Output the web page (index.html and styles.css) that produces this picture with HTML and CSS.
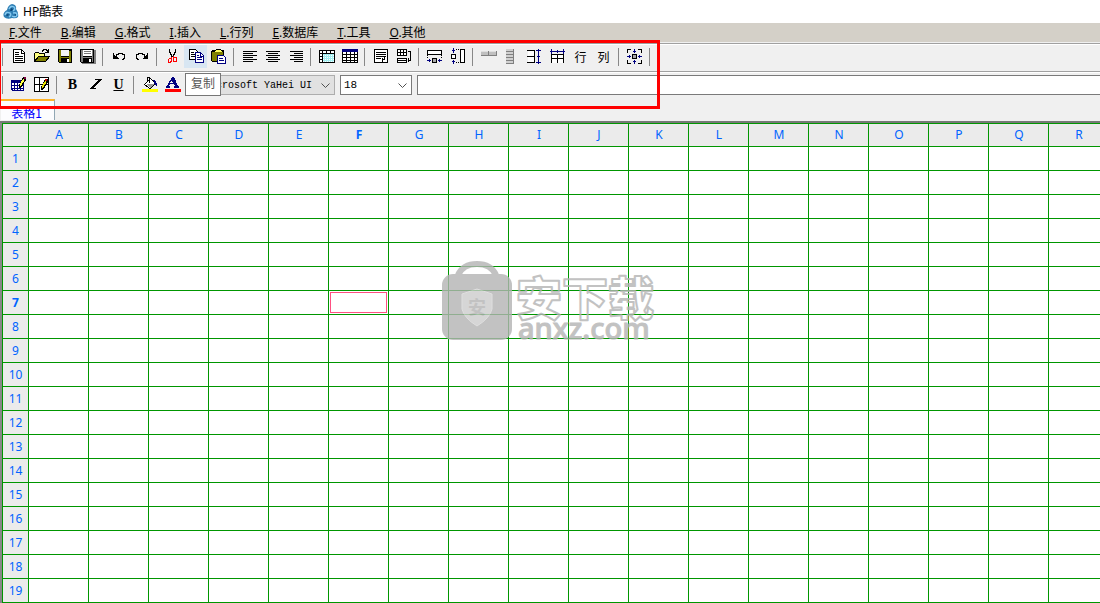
FILE: index.html
```html
<!DOCTYPE html>
<html lang="zh-CN">
<head>
<meta charset="utf-8">
<title>HP酷表</title>
<link rel="stylesheet" href="styles.css">
</head>
<body>
<div class="app">
  <header class="title-bar">
    <svg class="logo" viewBox="0 0 16 16" aria-hidden="true"><path d="M4 6Q5 1 9 0Q14 1 13 5Q16 9 15 13Q13 15 9 14Q4 16 1 13Q-1 9 4 6Z" fill="#2f7fb5"/><path d="M6 5Q8 1 11 3Q13 5 10 7M2 11Q3 7 7 9Q9 11 6 13M10 9Q14 8 14 11Q12 14 9 12" fill="none" stroke="#86c9ef" stroke-width="1.4"/><path d="M8 4l2 1-1 2-2 0zM3 11l2-1 1 1-2 1zM11 11l2-1 0 2z" fill="#0b4678"/></svg>
    <span>HP酷表</span>
  </header>
  <nav class="menu">
    <button><u>F</u>.文件</button><button><u>B</u>.编辑</button><button><u>G</u>.格式</button><button><u>I</u>.插入</button><button><u>L</u>.行列</button><button><u>E</u>.数据库</button><button><u>T</u>.工具</button><button><u>O</u>.其他</button>
  </nav>

  <div class="toolbar">
    <i class="sep first"></i>
    <button class="tool" aria-label="新建"><svg viewBox="0 0 17 17"><path d="M3.500 1.500H11.500L14.500 4.500V14.500H3.500Z" fill="#fff" stroke="#000"/><path d="M11.500 1v4H15M5 4.500h4M5 6.500h4M5 8.500h8M5 10.500h8M5 12.500h8" fill="none" stroke="#000"/></svg></button>
    <button class="tool" aria-label="打开"><svg viewBox="0 0 17 17"><path d="M1.500 13.500V5.500L2.500 4.500H5.500L6.500 5.500H11.500V8.500" fill="#ffff80" stroke="#000"/><path d="M1.500 13.500L5.500 8.500H16.500L12.500 13.500Z" fill="#808000" stroke="#000"/><path d="M9 3.500V2.500H10V1.500H13V2.500H14V3.500H15V5M12 4.500h4M15.500 1v4" fill="none" stroke="#000"/></svg></button>
    <button class="tool" aria-label="保存"><svg viewBox="0 0 17 17"><path d="M2 1H16V15H3L2 14Z"/><path d="M3 2H5V9H13V3H15V14H3Z" fill="#808000"/><path d="M5 2h8v6H5z" fill="#f4f4f4"/><path d="M5 10h8v5H5z"/><path d="M11 11h2v3h-2z" fill="#fff"/></svg></button>
    <button class="tool" aria-label="另存为"><svg viewBox="0 0 17 17"><path d="M3 2h14v14H3z" fill="#808080"/><path d="M1 1H15V15H2L1 14Z"/><path d="M2 2h2v7h9V2h1v12H2z" fill="#808080"/><path d="M4 2h9v6H4z" fill="#fff"/><path d="M5 3.500h7M5 5.500h7" stroke="#777"/><path d="M4 10h9v5H4z"/><path d="M10 11h2v3h-2z" fill="#fff"/></svg></button>
    <i class="sep"></i>
    <button class="tool" aria-label="撤消"><svg viewBox="0 0 17 17"><path d="M3 5v6h6L7 9H6V8H5V7H4V5Z"/><path d="M5 8.500H6.500V6.500H8.500V5.500H12.500V6.500H14.500V10.500H13.500V11.500H12" fill="none" stroke="#000"/></svg></button>
    <button class="tool" aria-label="重做"><svg viewBox="0 0 17 17"><path d="M15 5v6H9l2-2h1V8h1V7h1V5Z"/><path d="M13 8.500H11.500V6.500H9.500V5.500H5.500V6.500H3.500V10.500H4.500V11.500H6" fill="none" stroke="#000"/></svg></button>
    <i class="sep"></i>
    <button class="tool" aria-label="剪切"><svg viewBox="0 0 17 17"><path d="M5.500 1V4.500H6.500V6.500H7.500V8.500H8.500V9M11.500 1V4.500H10.500V6.500H9.500V8.500" fill="none" stroke="#000"/><path d="M7.500 9v2M9.500 8v2M5 10.500H7.500V13.500H6.500V14.500H4.500V11.500H5M10 9.500H12.500V13.500H9.500V9.500" fill="none" stroke="red"/></svg></button>
    <button class="tool hot" aria-label="复制"><svg viewBox="0 0 17 17"><path d="M2.500 1.500H8.500L10.500 3.500V11.500H2.500Z" fill="#fff" stroke="#000"/><path d="M4 4.500h3M4 6.500h4M4 8.500h4" stroke="#000"/><path d="M8.500 4.500H13.500L16.500 7.500V14.500H8.500Z" fill="#fff" stroke="#000080"/><path d="M13.500 4v4H17M10 7.500h2M10 9.500h5M10 11.500h5" fill="none" stroke="#000080"/></svg></button>
    <button class="tool" aria-label="粘贴"><svg viewBox="0 0 17 17"><path d="M1 3L2 2H5L6 1H10L11 2H14V14H2L1 13Z"/><path d="M2 4h11v9H2z" fill="#808000"/><path d="M4 4h8L10 2H6z" fill="#ffff60"/><path d="M7.500 7.500H13.500L15.500 9.500V15.500H7.500Z" fill="#fff" stroke="#000080"/><path d="M9 10.500h4M9 12.500h5" stroke="#000080"/></svg></button>
    <i class="sep"></i>
    <button class="tool" aria-label="左对齐"><svg viewBox="0 0 17 17"><path d="M2 3.500h14M2 5.500h10M2 7.500h14M2 9.500h10M2 11.500h14M2 13.500h10" stroke="#000"/></svg></button>
    <button class="tool" aria-label="居中"><svg viewBox="0 0 17 17"><path d="M2 3.500h14M4 5.500h10M2 7.500h14M4 9.500h10M2 11.500h14M4 13.500h10" stroke="#000"/></svg></button>
    <button class="tool" aria-label="右对齐"><svg viewBox="0 0 17 17"><path d="M3 3.500h13M7 5.500h9M3 7.500h13M7 9.500h9M3 11.500h13M7 13.500h9" stroke="#000"/></svg></button>
    <i class="sep"></i>
    <button class="tool" aria-label="冻结"><svg viewBox="0 0 17 17"><path d="M1.500 2.500h15v12h-15z" fill="#fff" stroke="#000"/><path d="M5 6h11v8H5z" fill="#a4f0f2"/><path d="M5 7.500h11M5 9.500h11M5 11.500h11M5 13.500h11" stroke="#fff" stroke-dasharray="1 1"/><path d="M1 5.500h4M1 8.500h3M1 11.500h3M4.500 2v12M8.500 2v3M12.500 2v3M5 5.500h11" stroke="#000"/></svg></button>
    <button class="tool" aria-label="表格"><svg viewBox="0 0 17 17"><path d="M1.500 1.500h15v13h-15z" fill="#fff" stroke="#000"/><path d="M1 1h16v3H1z" fill="#000080"/><path d="M1 6.500h15M1 9.500h15M1 12.500h15M5.500 4v11M9.500 4v11M13.500 4v11" stroke="#000"/></svg></button>
    <i class="sep"></i>
    <button class="tool" aria-label="自动换行"><svg viewBox="0 0 17 17"><path d="M2.500 1.500h13v13h-13z" fill="#fff" stroke="#000"/><path d="M4 4.500h10M4 6.500h10M4 8.500h10M4 10.500h5M12.500 9v2.500H9.500M10.500 10v4" fill="none" stroke="#000"/></svg></button>
    <button class="tool" aria-label="转置"><svg viewBox="0 0 17 17"><path d="M2.500 1.500h9v6h-9zM2.500 10.500h9v4h-9z" fill="#fff" stroke="#000"/><path d="M2 4.500h9M5.500 1v6M8.500 1v6M3 12.500h8M13 3.500h2.500V12.500H13M13.500 10v4" fill="none" stroke="#000"/></svg></button>
    <i class="sep"></i>
    <button class="tool" aria-label="等行高"><svg viewBox="0 0 17 17"><path d="M1.500 2.500h14v4h-14z" fill="#fff" stroke="#000"/><path d="M1.500 7v4M15.500 7v4" stroke="#000" stroke-dasharray="1 1"/><path d="M6.500 10.500h4v4h-4z" fill="#aaa" stroke="#000"/><path d="M1 12.500h4M3.500 11v3M12 12.500h4M13.500 11v3" stroke="#000080"/></svg></button>
    <button class="tool" aria-label="等列宽"><svg viewBox="0 0 17 17"><path d="M11.500 1.500h4v13h-4zM2.500 6.500h4v4h-4z" fill="#fff" stroke="#000"/><path d="M7 1.500h4M7 14.500h4" stroke="#000" stroke-dasharray="1 1"/><path d="M4.500 0v5M3 2.500h3M4.500 12v4M3 13.500h3" stroke="#000080"/></svg></button>
    <i class="sep"></i>
    <button class="tool" aria-label="合并行" disabled><svg viewBox="0 0 17 17"><path d="M1 3h16v5H1z" fill="#808080"/><path d="M1 3h7v4H1zM9 3h7v4H9z" fill="#c0c0c0"/><path d="M1 3.500h7M9 3.500h7" stroke="#fff" stroke-opacity=".5"/></svg></button>
    <button class="tool" aria-label="合并列" disabled><svg viewBox="0 0 17 17"><path d="M3 1h8v15H3z" fill="#808080"/><path d="M3 1h7v2H3zM3 4h7v2H3zM3 7h7v2H3zM3 10h7v2H3zM3 13h7v2H3z" fill="#d0d0d0"/></svg></button>
    <button class="tool" aria-label="拆分行"><svg viewBox="0 0 17 17"><path d="M2 3h7v11H2z" fill="#fff"/><path d="M1 2.500h7.500V14.500H1M1 8.500h8" fill="none" stroke="#000"/><path d="M12.500 1v15M10 2.500h5M10 14.500h5M11 8.500h3" stroke="#000080"/></svg></button>
    <button class="tool" aria-label="拆分列"><svg viewBox="0 0 17 17"><path d="M2 7h13v8H2z" fill="#fff"/><path d="M2.500 15V6.500H14.500V15M8.500 7v8M2 10.500h12" fill="none" stroke="#000"/><path d="M1 3.500h15M2.500 1v5M8.500 2v3M14.500 1v5" stroke="#000080"/></svg></button>
    <button class="tool word">行</button>
    <button class="tool word">列</button>
    <i class="sep"></i>
    <button class="tool" aria-label="适应"><svg viewBox="0 0 17 17"><path d="M5 1.500H1.500V5M12 1.500h3.500V5M1.500 12v3.500H5M12 15.500h3.500V12M6.500 6.500h4v4h-4z" fill="none" stroke="#000"/><path d="M7 7h3v3H7z" fill="#aaa"/><path d="M8.500 1v4M7 3.500h3M8.500 12v4M7 13.500h3M1 8.500h4M3.500 7v3M12 8.500h4M13.500 7v3" stroke="#000080"/></svg></button>
    <i class="sep"></i>
  </div>

  <div class="toolbar">
    <i class="sep first"></i>
    <button class="tool" aria-label="表格属性"><svg viewBox="0 0 17 17"><path d="M1 4h13v11H2V14H1z" fill="#000080"/><path d="M2 7h2v2H2zM5 7h2v2H5zM8 7h2v2H8zM2 10h2v2H2zM5 10h2v2H5zM8 10h2v2H8zM11 10h2v2h-2zM3 13h1v1H3zM5 13h2v1H5zM8 13h2v1H8zM11 13h2v1h-2z" fill="#fff"/><path d="M13 1h3v3L11 12H9V9z"/><path d="M13 3h1v2l-3 5h-1V8z" fill="#ffff40"/><path d="M14 1h2v2h-2z" fill="#800040"/></svg></button>
    <button class="tool" aria-label="单元格属性"><svg viewBox="0 0 17 17"><path d="M1.500 1.500h14v14h-14z" fill="#fff" stroke="#000"/><path d="M6.500 1v14M1 8.500h14" stroke="#000"/><path d="M12 3h3v3l-5 8H8v-3z"/><path d="M12 5h1v2l-3 5H9v-2z" fill="#e8e000"/><path d="M12 3h2v2h-2z" fill="#c00000"/></svg></button>
    <i class="sep"></i>
    <button class="tool bold">B</button>
    <button class="tool" aria-label="斜体"><svg viewBox="0 0 17 17"><path d="M8 3.500h7M3 12.500h6" stroke="#000"/><path d="M11 4h3L7 12H4z"/></svg></button>
    <button class="tool under">U</button>
    <i class="sep"></i>
    <button class="tool" aria-label="填充颜色"><svg viewBox="0 0 17 17"><path d="M3.500 8.500L9.500 2.500L14.500 7.500L9 12.500Z" fill="#fff" stroke="#000"/><path d="M5 8h8l-4 4z" fill="#999"/><path d="M12 4q4 0 4 7l-2-2z" fill="#000080"/><path d="M6.500 5V1.500H8.500V7" fill="none" stroke="#000"/><path d="M1 13h16v3H1z" fill="#ff0"/></svg></button>
    <button class="tool" aria-label="字体颜色"><svg viewBox="0 0 17 17"><path d="M8 1h2l4 9h1v2h-5v-2h1l-1-2H6l-1 2h1v2H2v-2h1zM8 4L6 7h3z" fill="#000080" fill-rule="evenodd"/><path d="M1 13h16v3H1z" fill="red"/></svg></button>
    <i class="sep"></i>
    <span class="combo font-combo"><select aria-label="字体"><option>Microsoft YaHei UI</option></select><svg viewBox="0 0 9 5"><path d="M0.500 0.500L4.500 4.500L8.500 0.500"/></svg></span>
    <span class="combo size-combo"><select aria-label="字号"><option>18</option></select><svg viewBox="0 0 9 5"><path d="M0.500 0.500L4.500 4.500L8.500 0.500"/></svg></span>
    <input class="formula" type="text" aria-label="编辑栏">
    <span class="tip" role="tooltip">复制</span>
  </div>

  <div class="tabs"><button class="tab">表格1</button></div>
  <main class="sheet">
    <table id="grid"></table>
    <svg class="watermark" viewBox="0 0 216 92" role="img" aria-label="安下载 anxz.com">
      <g opacity=".8">
        <path d="M17 15Q22 4 36 4Q50 4 55 15" fill="none" stroke="#b4b4b4" stroke-width="6"/>
        <rect x="1" y="14" width="70" height="66" rx="11" fill="#b4b4b4"/>
        <path d="M36 29L51 34V49Q49 58 36 66Q23 58 21 49V34Z" fill="#ccc" stroke="#d8d8d8"/>
        <text x="36" y="54" class="mark">安</text>
        <text x="75" y="55" class="brand">安下载</text>
        <text x="77" y="79" class="domain">anxz.com</text>
      </g>
    </svg>
  </main>
  <div class="highlight"></div>
</div>
<script src="grid.js"></script>
</body>
</html>
```
FILE: styles.css
```css
* { box-sizing: border-box; }
body { margin: 0; background: #fff; color: #000; font: 12px/16px "Noto Sans", "Noto Sans CJK SC", sans-serif; }
button, input, select { font: inherit; color: inherit; margin: 0; padding: 0; border: 0; background: none; border-radius: 0; }
.app { position: relative; height: 100vh; overflow: hidden; display: flex; flex-direction: column; background: #f0f0f0; }
.title-bar { flex: none; height: 23px; display: flex; align-items: center; gap: 4px; padding-left: 3px; background: #fff; }
.logo { width: 16px; height: 16px; }
.menu { flex: none; height: 19px; margin-bottom: 1px; display: flex; gap: 19px; padding-left: 9px; background: #d4d0c8; }
.menu button { white-space: nowrap; }

.toolbar { position: relative; flex: none; height: 28px; display: flex; align-items: center; padding-bottom: 2px; border-top: 1px solid #a0a0a0; box-shadow: inset 0 1px #fff; }
.sep { flex: none; width: 5px; height: 18px; margin-left: 3px; border-left: 1px solid #888; }
.sep.first { margin-left: 2px; }
.tool { flex: none; width: 23px; height: 23px; display: flex; align-items: center; justify-content: flex-start; padding-left: 3px; }
.tool svg { width: 17px; height: 17px; shape-rendering: crispEdges; }
.tool.hot { background: #d8e6f2; }
.tool.word { justify-content: center; padding: 0; font-family: "Noto Sans CJK SC", sans-serif; }
.tool.bold, .tool.under { justify-content: center; padding: 0; font: bold 14px/18px "Liberation Serif", serif; }
.tool.under { text-decoration: underline; }
.combo { position: relative; align-self: flex-end; flex: none; height: 20px; margin: 0 5px 2px 0; }
.combo select { appearance: none; width: 100%; height: 20px; padding: 1px 0 0 11px; border: 1px solid #adadad; background: #e1e1e1; font: 10px/17px "Liberation Mono", monospace; }
.combo svg { position: absolute; right: 5px; top: 8px; width: 9px; height: 5px; fill: none; stroke: #505050; pointer-events: none; }
.font-combo { width: 143px; }
.size-combo { width: 72px; }
.combo.size-combo select { background: #fff; border-color: #7a7a7a; padding: 0 0 0 3px; font-size: 11px; }
.formula { flex: 1; min-width: 0; align-self: flex-end; height: 20px; margin-bottom: 2px; border: 1px solid #7a7a7a; border-right: 0; background: #fff; padding: 0 4px; }
.tip { position: absolute; left: 185px; top: 1px; height: 23px; padding: 0 5px; border: 1px solid #767676; background: #fff; color: #575757; line-height: 20px; }

.tabs { flex: none; height: 24px; display: flex; padding-left: 1px; border-bottom: 2px solid #777; }
.tab { width: 54px; height: 21px; padding: 4px 2px 0 0; border-top: 2px solid #ffb428; border-right: 1px solid #91a7b4; background: #fcfcfe; color: #00f; font: 12px/15px "Noto Sans CJK SC", sans-serif; }
.sheet { position: relative; flex: 1; overflow: hidden; border-left: 2px solid #888; background: #fff; }
#grid { width: 1107px; table-layout: fixed; border-spacing: 0; border: solid #009600; border-width: 1px 0 0 1px; }
#grid th, #grid td { height: 24px; padding: 0; border: solid #009600; border-width: 0 1px 1px 0; }
#grid th { background: #ebebeb; color: #0064ff; font-weight: 400; line-height: 16px; text-align: center; }
#grid thead th { height: 23px; padding-left: 1px; }
#grid thead th:first-child { width: 26px; }
#grid th.current { font-weight: 700; }
#grid td.active { padding: 1px; }
.cursor { height: 21px; border: 1px solid #ff5082; }

.watermark { position: absolute; left: 439px; top: 137px; width: 216px; height: 92px; pointer-events: none; }
.mark { font: 700 18px "Noto Sans CJK SC", sans-serif; text-anchor: middle; fill: #b4b4b4; }
.brand { font: 900 46px "Noto Sans CJK SC", sans-serif; fill: none; stroke: #b4b4b4; stroke-width: 2px; stroke-linejoin: round; }
.domain { font: 500 29px "Noto Sans", sans-serif; fill: #b4b4b4; stroke: #b4b4b4; stroke-width: 1px; }
.highlight { position: absolute; left: -2px; top: 40px; width: 662px; height: 69px; border: 3px solid red; pointer-events: none; }
```
FILE: grid.js
```js
const grid = document.getElementById("grid");
const columns = [..."ABCDEFGHIJKLMNOPQR"];
const rowCount = 19;
const active = { column: "F", row: 7 };

const header = grid.createTHead().insertRow();
header.appendChild(document.createElement("th"));
for (const name of columns) {
  const th = document.createElement("th");
  th.scope = "col";
  th.textContent = name;
  if (name === active.column) th.className = "current";
  header.appendChild(th);
}

const body = grid.createTBody();
for (let n = 1; n <= rowCount; n++) {
  const row = body.insertRow();
  const th = document.createElement("th");
  th.scope = "row";
  th.textContent = n;
  if (n === active.row) th.className = "current";
  row.appendChild(th);
  for (const name of columns) {
    const cell = row.insertCell();
    if (n === active.row && name === active.column) {
      cell.className = "active";
      const cursor = document.createElement("div");
      cursor.className = "cursor";
      cell.appendChild(cursor);
    }
  }
}
```
